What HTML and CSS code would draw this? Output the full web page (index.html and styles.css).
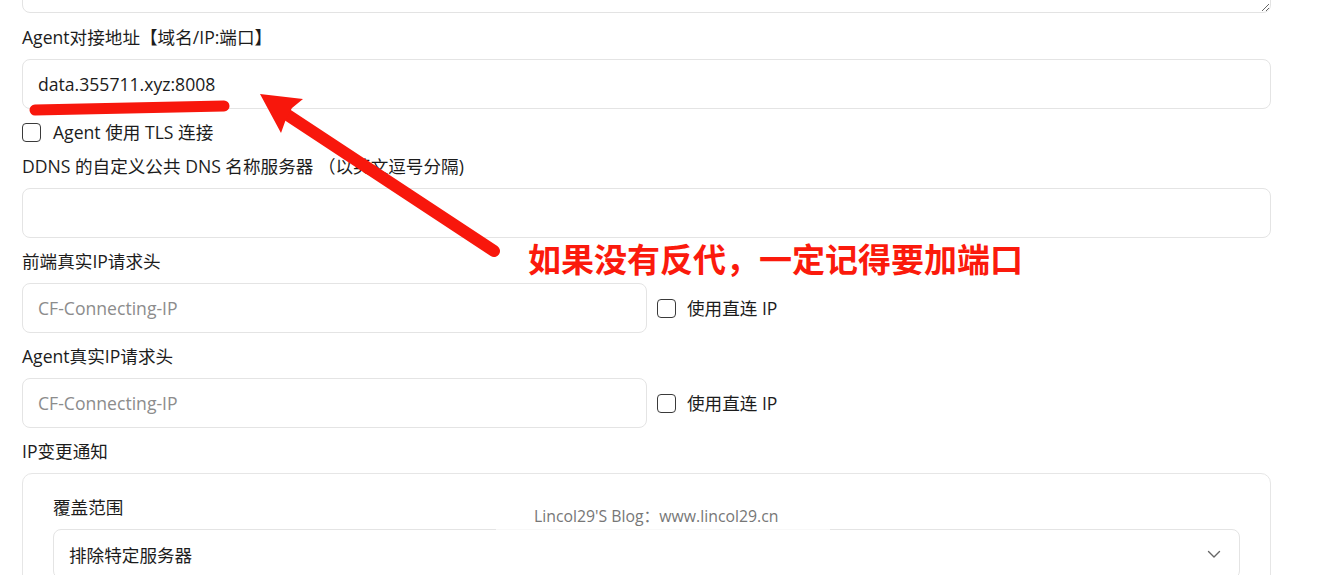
FILE: index.html
```html
<!DOCTYPE html>
<html lang="zh-CN">
<head>
<meta charset="utf-8">
<title>Agent settings</title>
<link rel="stylesheet" href="styles.css">
</head>
<body>
<div class="page">
  <textarea class="ta"></textarea>

  <label class="lbl lbl-first">Agent对接地址【域名/IP:端口】</label>
  <input class="inp" type="text" value="data.355711.xyz:8008">

  <label class="check check-row"><span class="box"></span><span>Agent 使用 TLS 连接</span></label>

  <label class="lbl lbl-after-check">DDNS 的自定义公共 DNS 名称服务器 （以英文逗号分隔)</label>
  <input class="inp" type="text">

  <label class="lbl">前端真实IP请求头</label>
  <div class="row">
    <input class="inp inp-half" type="text" placeholder="CF-Connecting-IP">
    <label class="check"><span class="box"></span><span>使用直连 IP</span></label>
  </div>

  <label class="lbl">Agent真实IP请求头</label>
  <div class="row">
    <input class="inp inp-half" type="text" placeholder="CF-Connecting-IP">
    <label class="check"><span class="box"></span><span>使用直连 IP</span></label>
  </div>

  <label class="lbl">IP变更通知</label>
  <div class="card">
    <div class="card-lbl">覆盖范围</div>
    <div class="select">
      <span>排除特定服务器</span>
      <svg class="chev" width="14" height="9" viewBox="0 0 14 9"><path d="M1.5 1.5 L7 7 L12.5 1.5" fill="none" stroke="#666" stroke-width="1.4" stroke-linecap="round" stroke-linejoin="round"/></svg>
    </div>
  </div>
</div>

<div class="watermark">Lincol29'S Blog：www.lincol29.cn</div>

<svg class="annot" width="1340" height="575" viewBox="0 0 1340 575">
  <line x1="35" y1="110" x2="224" y2="106" stroke="#f8170c" stroke-width="11" stroke-linecap="round"/>
  <line x1="494" y1="251" x2="286" y2="114" stroke="#f8170c" stroke-width="12" stroke-linecap="round"/>
  <polygon points="260,94 303,99 292,108 286,119 281,133" fill="#f8170c"/>
</svg>
<div class="note">如果没有反代，一定记得要加端口</div>
</body>
</html>
```

FILE: styles.css
```css
html, body {
  margin: 0;
  padding: 0;
  background: #ffffff;
  overflow: hidden;
}

body {
  font-family: "Open Sans", "Noto Sans CJK SC", sans-serif;
  font-size: 17.6px;
  color: #1c1c1c;
  position: relative;
  width: 1340px;
  height: 575px;
}

.page {
  display: flex;
  flex-direction: column;
  width: 1249px;
  margin-left: 22px;
}

.ta {
  box-sizing: border-box;
  height: 80px;
  margin-top: -67px;
  width: 100%;
  border: 1px solid #e3e3e3;
  border-radius: 8px;
  resize: vertical;
  font: inherit;
  background: #fff;
}

.lbl {
  display: block;
  margin-top: 11px;
  margin-bottom: 10px;
  line-height: 24px;
  height: 24px;
  white-space: nowrap;
}

.lbl-first {
  margin-top: 12px;
}

.lbl-after-check {
  margin-top: 10px;
}

.inp {
  box-sizing: border-box;
  height: 50px;
  width: 100%;
  border: 1px solid #e4e4e4;
  border-radius: 8px;
  padding: 0 15px;
  font-family: inherit;
  font-size: 17.6px;
  color: #1c1c1c;
  background: #fff;
  outline: none;
}

.inp::placeholder {
  color: #8c8c8c;
}

.inp-half {
  width: 625px;
  flex: none;
}

.check {
  display: flex;
  align-items: center;
  gap: 12px;
  height: 24px;
  line-height: 24px;
  white-space: nowrap;
}

.check-row {
  margin-top: 11px;
}

.box {
  box-sizing: border-box;
  width: 19px;
  height: 19px;
  border: 1.4px solid #3a3a3a;
  border-radius: 4px;
  flex: none;
  background: #fff;
}

.row {
  display: flex;
  align-items: center;
  gap: 10px;
}

.row .check {
  gap: 11px;
}

.card {
  box-sizing: border-box;
  border: 1px solid #e6e6e6;
  border-radius: 10px;
  padding: 21px 30px 0 30px;
  height: 120px;
}

.card-lbl {
  line-height: 24px;
  height: 24px;
  margin-bottom: 10px;
}

.select {
  box-sizing: border-box;
  height: 50px;
  border: 1px solid #e4e4e4;
  border-radius: 8px;
  padding: 0 18px 0 15px;
  display: flex;
  align-items: center;
  justify-content: space-between;
}

.watermark {
  position: absolute;
  left: 496px;
  top: 502px;
  width: 334px;
  height: 30px;
  background: rgba(255, 255, 255, 0.75);
  color: #777;
  font-size: 15.8px;
  line-height: 28px;
  text-align: left;
  padding-left: 38px;
  box-sizing: border-box;
  white-space: nowrap;
}

.annot {
  position: absolute;
  left: 0;
  top: 0;
  pointer-events: none;
}

.note {
  position: absolute;
  left: 528px;
  top: 237px;
  font-family: "Noto Sans CJK SC", sans-serif;
  font-weight: 700;
  font-size: 33px;
  line-height: 42px;
  color: #fb1a0c;
  white-space: nowrap;
}
```
